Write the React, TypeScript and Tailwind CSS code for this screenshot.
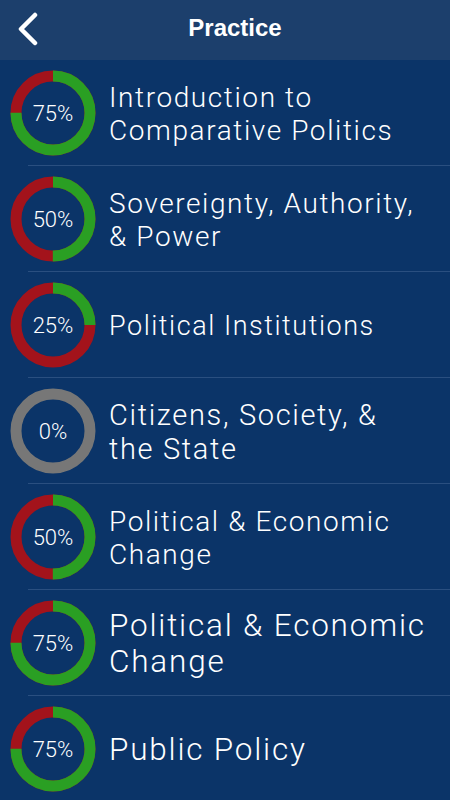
import React from 'react';

type Topic = { pct: number; title: string[]; size: string };

const topics: Topic[] = [
    { pct: 75, title: ['Introduction to', 'Comparative Politics'], size: 'text-[28px] leading-[33px]' },
    { pct: 50, title: ['Sovereignty, Authority,', '& Power'], size: 'text-[28px] leading-[33px]' },
    { pct: 25, title: ['Political Institutions'], size: 'text-[27px] leading-[33px]' },
    { pct: 0, title: ['Citizens, Society, &', 'the State'], size: 'text-[29px] leading-[34px]' },
    { pct: 50, title: ['Political & Economic', 'Change'], size: 'text-[28px] leading-[33px]' },
    { pct: 75, title: ['Political & Economic', 'Change'], size: 'text-[31.5px] leading-[36px]' },
    { pct: 75, title: ['Public Policy'], size: 'text-[31.5px] leading-[36px]' },
];

function Ring({ pct }: { pct: number }) {
    const r = 37;
    const c = 2 * Math.PI * r;
    const done = (pct / 100) * c;
    return (
        <div className="relative w-[86px] h-[86px] shrink-0">
            <svg width="86" height="86" viewBox="0 0 86 86" className="-rotate-90">
                {pct === 0 ? (
                    <circle cx="43" cy="43" r={r} fill="none" stroke="#777777" strokeWidth="11" />
                ) : (
                    <>
                        <circle cx="43" cy="43" r={r} fill="none" stroke="#a3131b" strokeWidth="11" />
                        <circle
                            cx="43"
                            cy="43"
                            r={r}
                            fill="none"
                            stroke="#2a9f23"
                            strokeWidth="11"
                            strokeDasharray={`${done} ${c}`}
                        />
                    </>
                )}
            </svg>
            <span className="absolute inset-0 flex items-center justify-center text-[22px] font-light text-white">
                {pct}%
            </span>
        </div>
    );
}

export default function App() {
    return (
        <div className="w-[450px] h-[800px] overflow-hidden bg-[#0b3468] text-white font-['Roboto',sans-serif]">
            <div className="h-[60px] bg-[#1c3f6c] flex items-center relative">
                <svg width="24" height="34" viewBox="0 0 24 34" className="ml-[16px] -mt-[2px]">
                    <path d="M19 3 L5 17 L19 31" fill="none" stroke="white" strokeWidth="4.5" strokeLinecap="round" strokeLinejoin="round" />
                </svg>
                <h1 className="absolute left-[20px] right-0 top-0 h-[60px] flex items-center justify-center pb-[5px] text-[24px] font-bold font-['Liberation_Sans',sans-serif]">
                    Practice
                </h1>
            </div>
            <div>
                {topics.map((t, i) => (
                    <div key={i} className="relative h-[106px] flex items-center pl-[10px] gap-[13px]">
                        <Ring pct={t.pct} />
                        <div className={`${t.size} font-light tracking-[0.057em] pt-[2px]`}>
                            {t.title.map((line, j) => (
                                <div key={j}>{line}</div>
                            ))}
                        </div>
                        {i < topics.length - 1 && (
                            <div className="absolute left-[28px] right-0 bottom-0 h-px bg-[#2a4f80]" />
                        )}
                    </div>
                ))}
            </div>
        </div>
    );
}
